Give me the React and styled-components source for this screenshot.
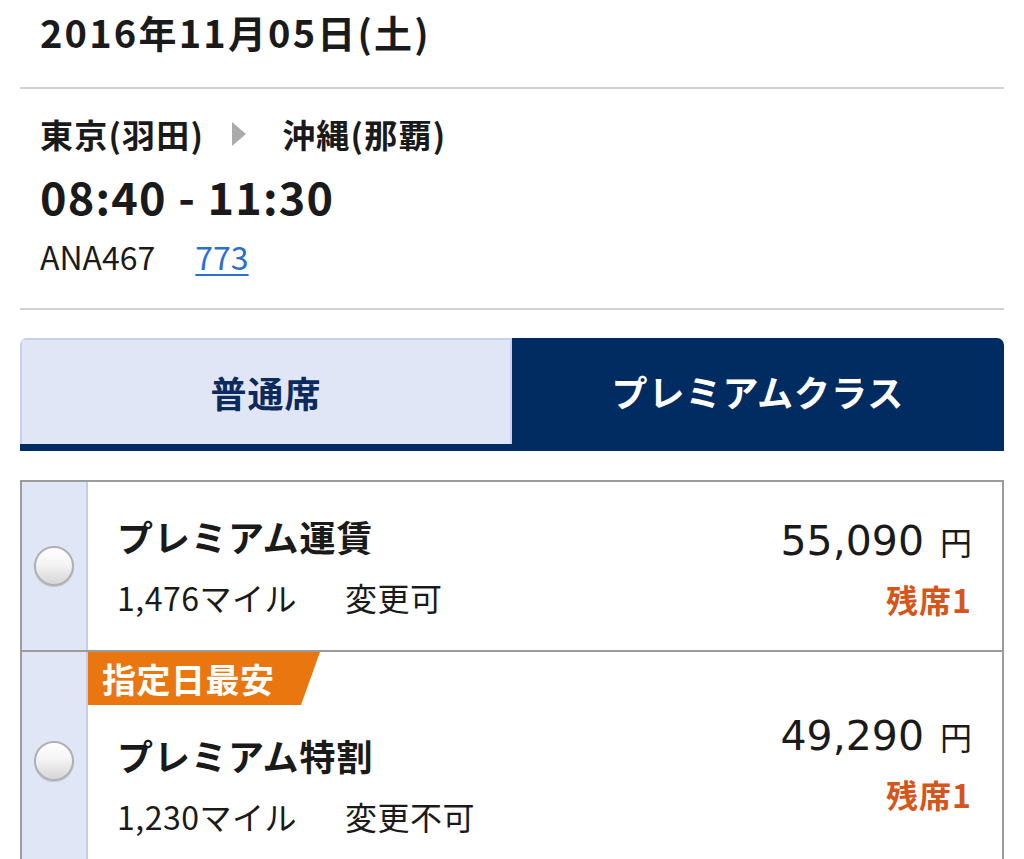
import React from "react";
import styled, { createGlobalStyle } from "styled-components";

const GlobalStyle = createGlobalStyle`
  html, body {
    margin: 0;
    padding: 0;
    background: #ffffff;
  }
  body {
    font-family: "Noto Sans CJK JP", "Noto Sans", sans-serif;
    color: #1a1a1a;
  }
`;

const fares = [
  {
    id: "premium",
    name: "プレミアム運賃",
    miles: "1,476マイル",
    rule: "変更可",
    price: "55,090",
    seats: "残席1",
  },
  {
    id: "tokuwari",
    name: "プレミアム特割",
    miles: "1,230マイル",
    rule: "変更不可",
    price: "49,290",
    seats: "残席1",
    badge: "指定日最安",
  },
];

const App = () => {
  return (
    <Page>
      <GlobalStyle />
      <DateHeader>2016年11月05日(土)</DateHeader>

      <Flight>
        <Route>
          <span>東京(羽田)</span>
          <Arrow />
          <span>沖縄(那覇)</span>
        </Route>
        <Time>08:40 - 11:30</Time>
        <FlightNo>
          ANA467
          <Aircraft href="#">773</Aircraft>
        </FlightNo>
      </Flight>

      <Tabs>
        <Tab>普通席</Tab>
        <Tab $active>プレミアムクラス</Tab>
      </Tabs>

      <FareTable>
        {fares.map((fare) => (
          <FareRow key={fare.id}>
            <RadioCell>
              <Radio />
            </RadioCell>
            <FareMain>
              <FareInfo $badge={!!fare.badge}>
                {fare.badge && <Badge>{fare.badge}</Badge>}
                <FareName $badge={!!fare.badge}>{fare.name}</FareName>
                <FareMeta>
                  <span>{fare.miles}</span>
                  <span>{fare.rule}</span>
                </FareMeta>
              </FareInfo>
              <PriceCol>
                <Price>
                  {fare.price}
                  <Yen>円</Yen>
                </Price>
                <Seats>{fare.seats}</Seats>
              </PriceCol>
            </FareMain>
          </FareRow>
        ))}
      </FareTable>
    </Page>
  );
};

const Page = styled.main`
  padding: 0 20px;
`;

const DateHeader = styled.h1`
  margin: 0;
  padding: 4px 20px 27px;
  font-size: 38px;
  font-weight: 700;
  line-height: 56px;
  letter-spacing: 2.2px;
  border-bottom: 2px solid #d2d2d2;
`;

const Flight = styled.section`
  padding: 22px 20px 30px;
  border-bottom: 2px solid #d2d2d2;
`;

const Route = styled.div`
  display: flex;
  align-items: center;
  font-size: 33px;
  font-weight: 700;
  line-height: 46px;
  letter-spacing: 1.2px;
`;

const Arrow = styled.i`
  width: 0;
  height: 0;
  margin: 0 36px 0 28px;
  border-top: 12px solid transparent;
  border-bottom: 12px solid transparent;
  border-left: 14px solid #ababab;
`;

const Time = styled.div`
  margin-top: 9px;
  font-size: 45px;
  font-weight: 700;
  line-height: 60px;
  letter-spacing: 1.2px;
`;

const FlightNo = styled.div`
  margin-top: 8px;
  font-size: 32px;
  line-height: 44px;
  display: flex;
  gap: 40px;
`;

const Aircraft = styled.a`
  color: #2b6fd1;
  text-decoration: underline;
  text-underline-offset: 4px;
  text-decoration-thickness: 2px;
`;

const Tabs = styled.nav`
  display: grid;
  grid-template-columns: 1fr 1fr;
  margin-top: 28px;
  border-bottom: 7px solid #002c61;
  border-radius: 7px 7px 0 0;
  overflow: hidden;
`;

const Tab = styled.div`
  height: 106px;
  display: flex;
  align-items: center;
  justify-content: center;
  box-sizing: border-box;
  font-size: 36px;
  font-weight: 700;
  letter-spacing: 1px;
  color: ${(p) => (p.$active ? "#ffffff" : "#0d2a5c")};
  background: ${(p) => (p.$active ? "#002c61" : "#e1e6f7")};
  border: ${(p) => (p.$active ? "none" : "2px solid #c9d0ea")};
  border-bottom: none;
`;

const FareTable = styled.div`
  margin-top: 29px;
  border: 2px solid #9c9c9c;
  border-bottom: none;
`;

const FareRow = styled.div`
  display: grid;
  grid-template-columns: 66px 1fr;

  & + & {
    border-top: 2px solid #9c9c9c;
  }
`;

const RadioCell = styled.div`
  display: flex;
  align-items: center;
  justify-content: center;
  background: #e1e6f7;
  border-right: 2px solid #c5cdea;
`;

const Radio = styled.span`
  width: 40px;
  height: 40px;
  border-radius: 50%;
  box-sizing: border-box;
  border: 2px solid #b0b0b0;
  background: linear-gradient(#ffffff 0%, #f4f4f4 45%, #d6d6d6 100%);
  box-shadow: 0 1px 1px rgba(0, 0, 0, 0.15);
`;

const FareMain = styled.div`
  display: flex;
  justify-content: space-between;
  padding-right: 30px;
`;

const FareInfo = styled.div`
  display: flex;
  flex-direction: column;
  align-items: flex-start;
  padding: ${(p) => (p.$badge ? "0" : "32px")} 0 34px 29px;
`;

const Badge = styled.span`
  margin-left: -29px;
  width: 232px;
  height: 53px;
  box-sizing: border-box;
  padding-left: 14px;
  display: flex;
  align-items: center;
  background: #ea760f;
  color: #ffffff;
  font-size: 34px;
  font-weight: 700;
  letter-spacing: 0.5px;
  clip-path: polygon(0 0, 100% 0, calc(100% - 19px) 100%, 0 100%);
`;

const FareName = styled.div`
  margin-top: ${(p) => (p.$badge ? "28px" : "0")};
  font-size: 36px;
  font-weight: 700;
  line-height: 44px;
  letter-spacing: 1px;
`;

const FareMeta = styled.div`
  margin-top: 20px;
  font-size: 32px;
  line-height: 38px;
  display: flex;
  gap: 48px;
  white-space: nowrap;
  letter-spacing: 0.5px;
`;

const PriceCol = styled.div`
  align-self: center;
  display: flex;
  flex-direction: column;
  align-items: flex-end;
`;

const Price = styled.div`
  font-family: "DejaVu Sans", "Noto Sans CJK JP", sans-serif;
  font-size: 41px;
  line-height: 56px;
  display: flex;
  align-items: baseline;
`;

const Yen = styled.span`
  font-family: "Noto Sans CJK JP", sans-serif;
  font-size: 32px;
  margin-left: 16px;
`;

const Seats = styled.div`
  margin-top: 10px;
  font-size: 32px;
  font-weight: 700;
  line-height: 40px;
  letter-spacing: 1px;
  color: #d4561b;
`;

export default App;
